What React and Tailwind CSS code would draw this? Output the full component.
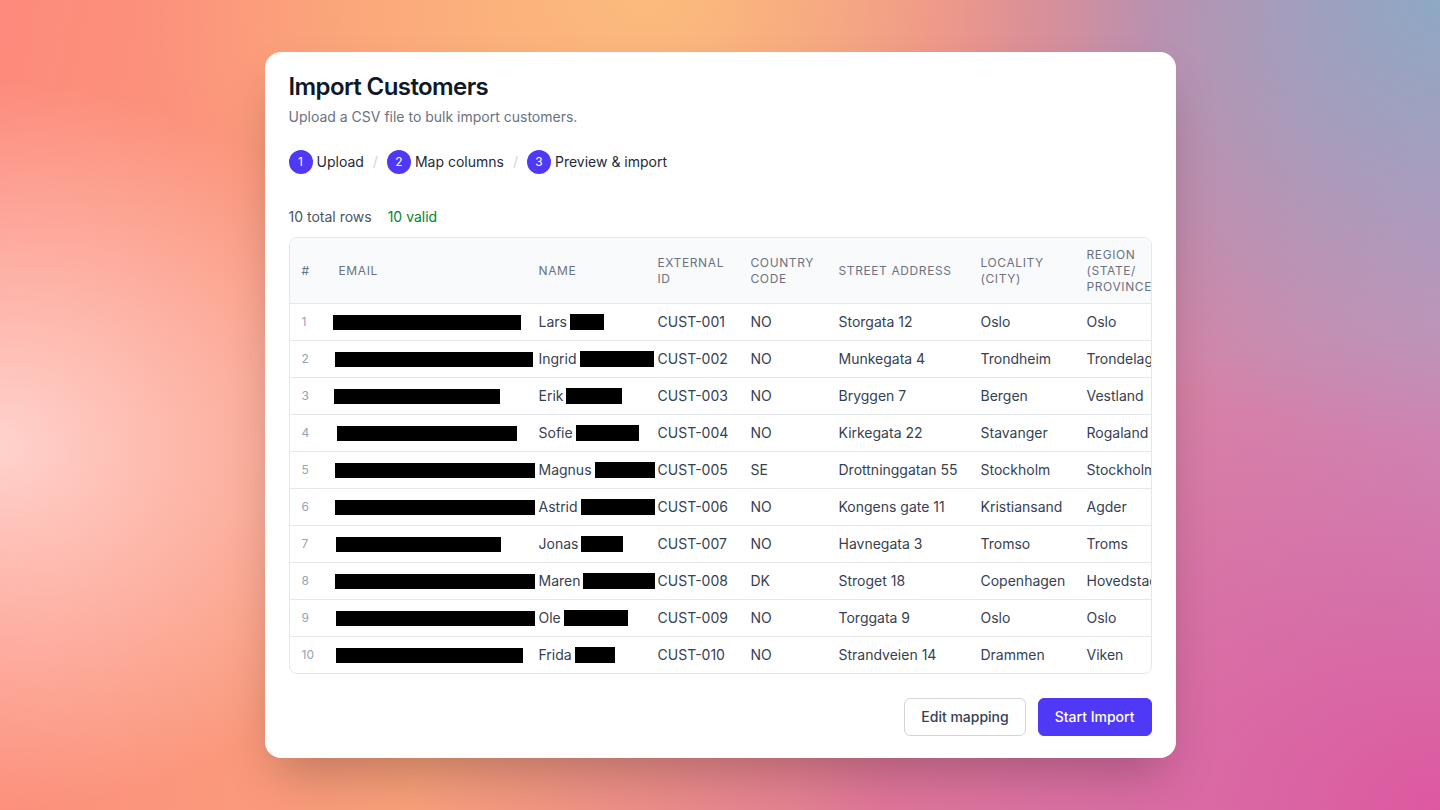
import React from 'react'

const rows = [
  { email: 'ml-[-6px] w-[188px]', first: 'Lars', last: 'w-[34px]', ext: 'CUST-001', cc: 'NO', street: 'Storgata 12', city: 'Oslo', region: 'Oslo' },
  { email: 'ml-[-4px] w-[198px]', first: 'Ingrid', last: 'w-[74px]', ext: 'CUST-002', cc: 'NO', street: 'Munkegata 4', city: 'Trondheim', region: 'Trondelag' },
  { email: 'ml-[-5px] w-[166px]', first: 'Erik', last: 'w-[56px]', ext: 'CUST-003', cc: 'NO', street: 'Bryggen 7', city: 'Bergen', region: 'Vestland' },
  { email: 'ml-[-2px] w-[180px]', first: 'Sofie', last: 'w-[63px]', ext: 'CUST-004', cc: 'NO', street: 'Kirkegata 22', city: 'Stavanger', region: 'Rogaland' },
  { email: 'ml-[-4px] w-[200px]', first: 'Magnus', last: 'w-[60px]', ext: 'CUST-005', cc: 'SE', street: 'Drottninggatan 55', city: 'Stockholm', region: 'Stockholm' },
  { email: 'ml-[-4px] w-[200px]', first: 'Astrid', last: 'w-[74px]', ext: 'CUST-006', cc: 'NO', street: 'Kongens gate 11', city: 'Kristiansand', region: 'Agder' },
  { email: 'ml-[-3px] w-[165px]', first: 'Jonas', last: 'w-[42px]', ext: 'CUST-007', cc: 'NO', street: 'Havnegata 3', city: 'Tromso', region: 'Troms' },
  { email: 'ml-[-4px] w-[200px]', first: 'Maren', last: 'w-[72px]', ext: 'CUST-008', cc: 'DK', street: 'Stroget 18', city: 'Copenhagen', region: 'Hovedstaden' },
  { email: 'ml-[-3px] w-[199px]', first: 'Ole', last: 'w-[64px]', ext: 'CUST-009', cc: 'NO', street: 'Torggata 9', city: 'Oslo', region: 'Oslo' },
  { email: 'ml-[-3px] w-[187px]', first: 'Frida', last: 'w-[40px]', ext: 'CUST-010', cc: 'NO', street: 'Strandveien 14', city: 'Drammen', region: 'Viken' },
]

const steps = ['Upload', 'Map columns', 'Preview & import']

export default function App() {
  return (
    <div className="h-[810px] w-full flex items-center justify-center font-['Inter',sans-serif] bg-[radial-gradient(ellipse_30%_45%_at_0%_55%,#ffd2cc_0%,transparent_100%),radial-gradient(ellipse_35%_45%_at_45%_0%,#fcbb7c_0%,transparent_100%),radial-gradient(ellipse_35%_55%_at_100%_0%,#8ea8c4_0%,transparent_100%),radial-gradient(ellipse_45%_60%_at_100%_100%,#de589f_0%,transparent_100%),linear-gradient(100deg,#fd8a7c_0%,#f9a07a_35%,#e07a98_65%,#c892bc_100%)]">
      <div className="w-[911px] bg-white rounded-2xl shadow-2xl px-6 pt-[19px] pb-[22px]">
        {/* header */}
        <h1 className="text-2xl font-semibold tracking-tight text-gray-900">Import Customers</h1>
        <p className="mt-1 text-sm text-gray-500">Upload a CSV file to bulk import customers.</p>

        {/* steps */}
        <div className="mt-[23px] flex items-center gap-[9px] text-sm text-gray-800">
          {steps.map((s, i) => (
            <React.Fragment key={s}>
              {i > 0 && <span className="text-gray-300">/</span>}
              <div className="flex items-center gap-1">
                <span className="size-6 rounded-full bg-indigo-600 text-white text-xs flex items-center justify-center">{i + 1}</span>
                <span>{s}</span>
              </div>
            </React.Fragment>
          ))}
        </div>

        {/* stats */}
        <div className="mt-[33px] flex items-center gap-4 text-sm">
          <span className="text-gray-600">10 total rows</span>
          <span className="text-green-700">10 valid</span>
        </div>

        {/* preview table */}
        <div className="mt-[10px] border border-gray-200 rounded-lg overflow-hidden">
          <table className="table-fixed w-[916px] border-collapse">
            <colgroup>
              <col className="w-[37px]" />
              <col className="w-[200px]" />
              <col className="w-[119px]" />
              <col className="w-[93px]" />
              <col className="w-[88px]" />
              <col className="w-[142px]" />
              <col className="w-[106px]" />
              <col className="w-[131px]" />
            </colgroup>
            <thead className="bg-gray-50">
              <tr className="border-b border-gray-200 text-left text-xs uppercase tracking-wider text-gray-500 *:py-[8.5px] *:px-3 *:font-normal *:align-middle">
                <th>#</th>
                <th>Email</th>
                <th>Name</th>
                <th>External ID</th>
                <th>Country Code</th>
                <th className="whitespace-nowrap">Street Address</th>
                <th>Locality (City)</th>
                <th className="whitespace-nowrap">Region<br />(State/<br />Province)</th>
              </tr>
            </thead>
            <tbody>
              {rows.map((r, i) => (
                <tr key={r.ext} className={`text-sm text-gray-700 whitespace-nowrap *:px-3 *:py-2 *:align-middle ${i < rows.length - 1 ? 'border-b border-gray-200' : ''}`}>
                  <td className="text-xs text-gray-400">{i + 1}</td>
                  <td>
                    <div className="flex items-center h-5">
                      <span className={`block h-[15px] bg-black shrink-0 ${r.email}`}></span>
                    </div>
                  </td>
                  <td>
                    <div className="flex items-center h-5">
                      <span>{r.first}</span>
                      <span className={`block h-4 bg-black ml-[3px] shrink-0 ${r.last}`}></span>
                    </div>
                  </td>
                  <td>{r.ext}</td>
                  <td>{r.cc}</td>
                  <td>{r.street}</td>
                  <td>{r.city}</td>
                  <td>{r.region}</td>
                </tr>
              ))}
            </tbody>
          </table>
        </div>

        {/* actions */}
        <div className="mt-6 flex justify-end gap-3">
          <button className="px-4 py-2 text-sm font-medium text-gray-700 bg-white border border-gray-300 rounded-md">Edit mapping</button>
          <button className="px-4 py-2 text-sm font-medium text-white bg-indigo-600 border border-indigo-600 rounded-md">Start Import</button>
        </div>
      </div>
    </div>
  )
}
